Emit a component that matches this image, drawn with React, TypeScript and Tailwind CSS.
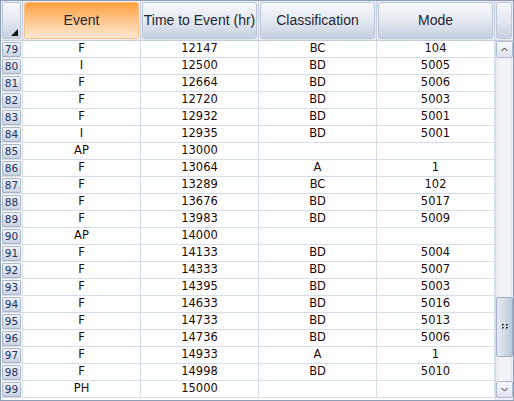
import React from "react";

const rows: [number, string, string, string, string][] = [
  [79, "F", "12147", "BC", "104"],
  [80, "I", "12500", "BD", "5005"],
  [81, "F", "12664", "BD", "5006"],
  [82, "F", "12720", "BD", "5003"],
  [83, "F", "12932", "BD", "5001"],
  [84, "I", "12935", "BD", "5001"],
  [85, "AP", "13000", "", ""],
  [86, "F", "13064", "A", "1"],
  [87, "F", "13289", "BC", "102"],
  [88, "F", "13676", "BD", "5017"],
  [89, "F", "13983", "BD", "5009"],
  [90, "AP", "14000", "", ""],
  [91, "F", "14133", "BD", "5004"],
  [92, "F", "14333", "BD", "5007"],
  [93, "F", "14395", "BD", "5003"],
  [94, "F", "14633", "BD", "5016"],
  [95, "F", "14733", "BD", "5013"],
  [96, "F", "14736", "BD", "5006"],
  [97, "F", "14933", "A", "1"],
  [98, "F", "14998", "BD", "5010"],
  [99, "PH", "15000", "", ""],
];

function HeaderCell({ label, active }: { label: string; active?: boolean }) {
  return (
    <div className="w-[118px] h-full pl-[1px] pr-[1px] pt-[1px] pb-[1px] border-r border-[#c9d2de]">
      <div
        className={
          active
            ? "h-full rounded-[3px] border border-[#f3c18a] bg-gradient-to-b from-[#ffa035] to-[#ffe9d0] flex items-center justify-center"
            : "h-full rounded-[3px] border border-[#bcc7d6] bg-gradient-to-b from-[#f6f8fb] via-[#e4e9f1] to-[#c6d0df] flex items-center justify-center"
        }
      >
        <span className="text-[14px] text-[#1f2633] font-['Liberation_Sans',Arial,sans-serif] whitespace-nowrap">
          {label}
        </span>
      </div>
    </div>
  );
}

export default function App() {
  return (
    <div className="w-[514px] h-[401px] bg-white border border-[#8d9db3] flex flex-col overflow-hidden font-['DejaVu_Sans',sans-serif]">
      <div className="flex h-[40px] shrink-0 bg-[#e8ecf2] border-b border-[#c3cddb]">
        <div className="w-[22px] h-full p-[1px] border-r border-[#c9d2de]">
          <div className="h-full rounded-[2px] border border-[#bcc7d6] bg-gradient-to-b from-[#f6f8fb] via-[#e4e9f1] to-[#c6d0df] flex items-end justify-end p-[2px]">
            <svg width="7" height="7" viewBox="0 0 7 7">
              <polygon points="7,0 7,7 0,7" fill="#111" />
            </svg>
          </div>
        </div>
        <HeaderCell label="Event" active />
        <HeaderCell label="Time to Event (hr)" />
        <HeaderCell label="Classification" />
        <HeaderCell label="Mode" />
        <div className="flex-1 h-full p-[1px]">
          <div className="h-full rounded-[3px] border border-[#bcc7d6] bg-gradient-to-b from-[#f6f8fb] via-[#e4e9f1] to-[#c6d0df]" />
        </div>
      </div>
      <div className="flex flex-1 min-h-0">
        <div className="flex flex-col w-[494px]">
          {rows.map(([n, ev, t, c, m]) => (
            <div key={n} className="flex h-[17px] shrink-0 border-b border-[#d6dee9]">
              <div className="w-[22px] h-full pl-[1px] pr-[1px] pt-[1px] border-r border-[#d6dee9]">
                <div className="h-[15px] rounded-[1px] border border-[#a9b7ca] bg-gradient-to-b from-[#f1f4f8] to-[#c9d3e1] flex items-center justify-center">
                  <span className="text-[10.5px] leading-none text-[#1b3361]">{n}</span>
                </div>
              </div>
              {[ev, t, c, m].map((v, i) => (
                <div
                  key={i}
                  className="w-[118px] h-full border-r border-[#d6dee9] flex items-center justify-center text-[11.5px] text-[#1c0808]"
                >
                  {v}
                </div>
              ))}
            </div>
          ))}
        </div>
        <div className="flex-1 flex flex-col bg-[#eef1f5] border-l border-[#d6dee9]">
          <div className="h-[17px] shrink-0 rounded-[2px] border border-[#aebbcd] bg-gradient-to-b from-[#f7f9fb] to-[#dde3ec] flex items-center justify-center">
            <svg width="7" height="5" viewBox="0 0 7 5">
              <polyline points="0.5,4 3.5,1 6.5,4" fill="none" stroke="#2b2b2b" strokeWidth="1" />
            </svg>
          </div>
          <div className="h-[239px] shrink-0 mx-[1px] border-x border-[#dfe4eb] bg-[#f1f3f7]" />
          <div className="h-[60px] shrink-0 rounded-[2px] border border-[#9fb0c6] bg-gradient-to-r from-[#e6ebf2] via-[#d3dbe7] to-[#bcc7d8] flex items-center justify-center">
            <svg width="6" height="6" viewBox="0 0 6 6">
              <rect x="0" y="0" width="2" height="1" fill="#333" />
              <rect x="0" y="1" width="1" height="1" fill="#333" />
              <rect x="4" y="0" width="2" height="1" fill="#333" />
              <rect x="4" y="1" width="1" height="1" fill="#333" />
              <rect x="0" y="3" width="2" height="1" fill="#333" />
              <rect x="0" y="4" width="1" height="1" fill="#333" />
              <rect x="4" y="3" width="2" height="1" fill="#333" />
              <rect x="4" y="4" width="1" height="1" fill="#333" />
            </svg>
          </div>
          <div className="h-[24px] shrink-0 mx-[1px] border-x border-[#dfe4eb] bg-[#f1f3f7]" />
          <div className="h-[17px] shrink-0 rounded-[2px] border border-[#aebbcd] bg-gradient-to-b from-[#f7f9fb] to-[#dde3ec] flex items-center justify-center">
            <svg width="7" height="5" viewBox="0 0 7 5">
              <polyline points="0.5,1 3.5,4 6.5,1" fill="none" stroke="#2b2b2b" strokeWidth="1" />
            </svg>
          </div>
        </div>
      </div>
    </div>
  );
}
